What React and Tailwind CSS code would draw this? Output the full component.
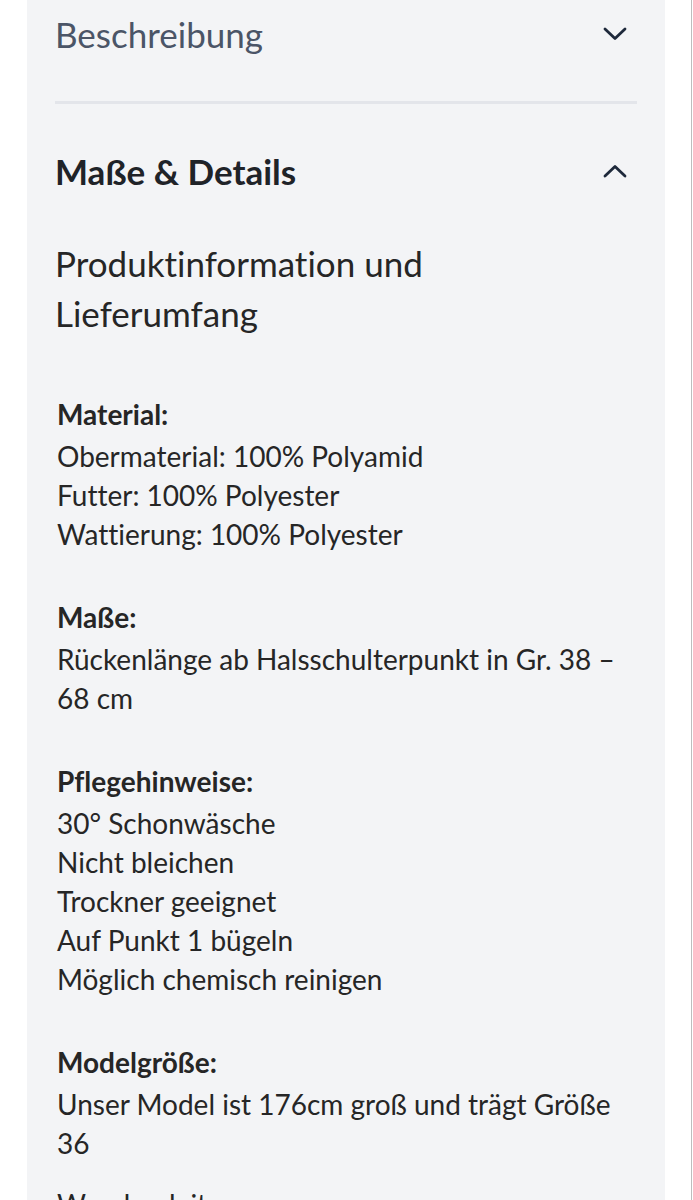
import React from "react";

const Chevron = ({ up }) => (
  <svg width="24" height="14" viewBox="0 0 24 14" fill="none" className="shrink-0">
    <path
      d={up ? "M2 12L12 2.5L22 12" : "M2 2L12 11.5L22 2"}
      stroke="#1e293b"
      strokeWidth="2.8"
      strokeLinecap="round"
      strokeLinejoin="round"
    />
  </svg>
);

const sections = [
  {
    label: "Material:",
    lines: ["Obermaterial: 100% Polyamid", "Futter: 100% Polyester", "Wattierung: 100% Polyester"],
  },
  {
    label: "Maße:",
    lines: ["Rückenlänge ab Halsschulterpunkt in Gr. 38 – 68 cm"],
  },
  {
    label: "Pflegehinweise:",
    lines: [
      "30° Schonwäsche",
      "Nicht bleichen",
      "Trockner geeignet",
      "Auf Punkt 1 bügeln",
      "Möglich chemisch reinigen",
    ],
  },
  {
    label: "Modelgröße:",
    lines: ["Unser Model ist 176cm groß und trägt Größe 36"],
  },
];

export default function App() {
  return (
    <div
      className="h-[1200px] overflow-hidden bg-white flex [font-variant-ligatures:none]"
      style={{ fontFamily: "Lato, 'Noto Sans', sans-serif" }}
    >
      <div className="ml-[27px] w-[638px] bg-[#f3f4f6] px-[28px]">
        {/* collapsed accordion */}
        <div className="h-[68px] flex items-center justify-between pr-[10px]">
          <span className="text-[35px] text-[#4b5567]">Beschreibung</span>
          <Chevron />
        </div>
        <div className="mt-[33px] h-[3px] bg-[#e3e5ea]" />

        {/* open accordion */}
        <div className="h-[134px] flex items-center justify-between pr-[10px]">
          <span className="text-[35px] font-bold text-[#1f2328]">Maße &amp; Details</span>
          <Chevron up />
        </div>

        <div className="text-[#262626]">
          <h3 className="text-[35px] leading-[50px] max-w-[440px]">
            Produktinformation und Lieferumfang
          </h3>

          <div className="mt-[57px] flex flex-col gap-[44px] text-[28px] leading-[39px] pl-[2px]">
            {sections.map((s) => (
              <div key={s.label}>
                <p className="font-bold mb-[3px]">{s.label}</p>
                {s.lines.map((l) => (
                  <p key={l}>{l}</p>
                ))}
              </div>
            ))}
            <p className="-mt-[22px]">Waschanleitung</p>
          </div>
        </div>
      </div>
      <div className="ml-auto mr-[1px] w-[1px] bg-[#bdbdbd]" />
    </div>
  );
}
